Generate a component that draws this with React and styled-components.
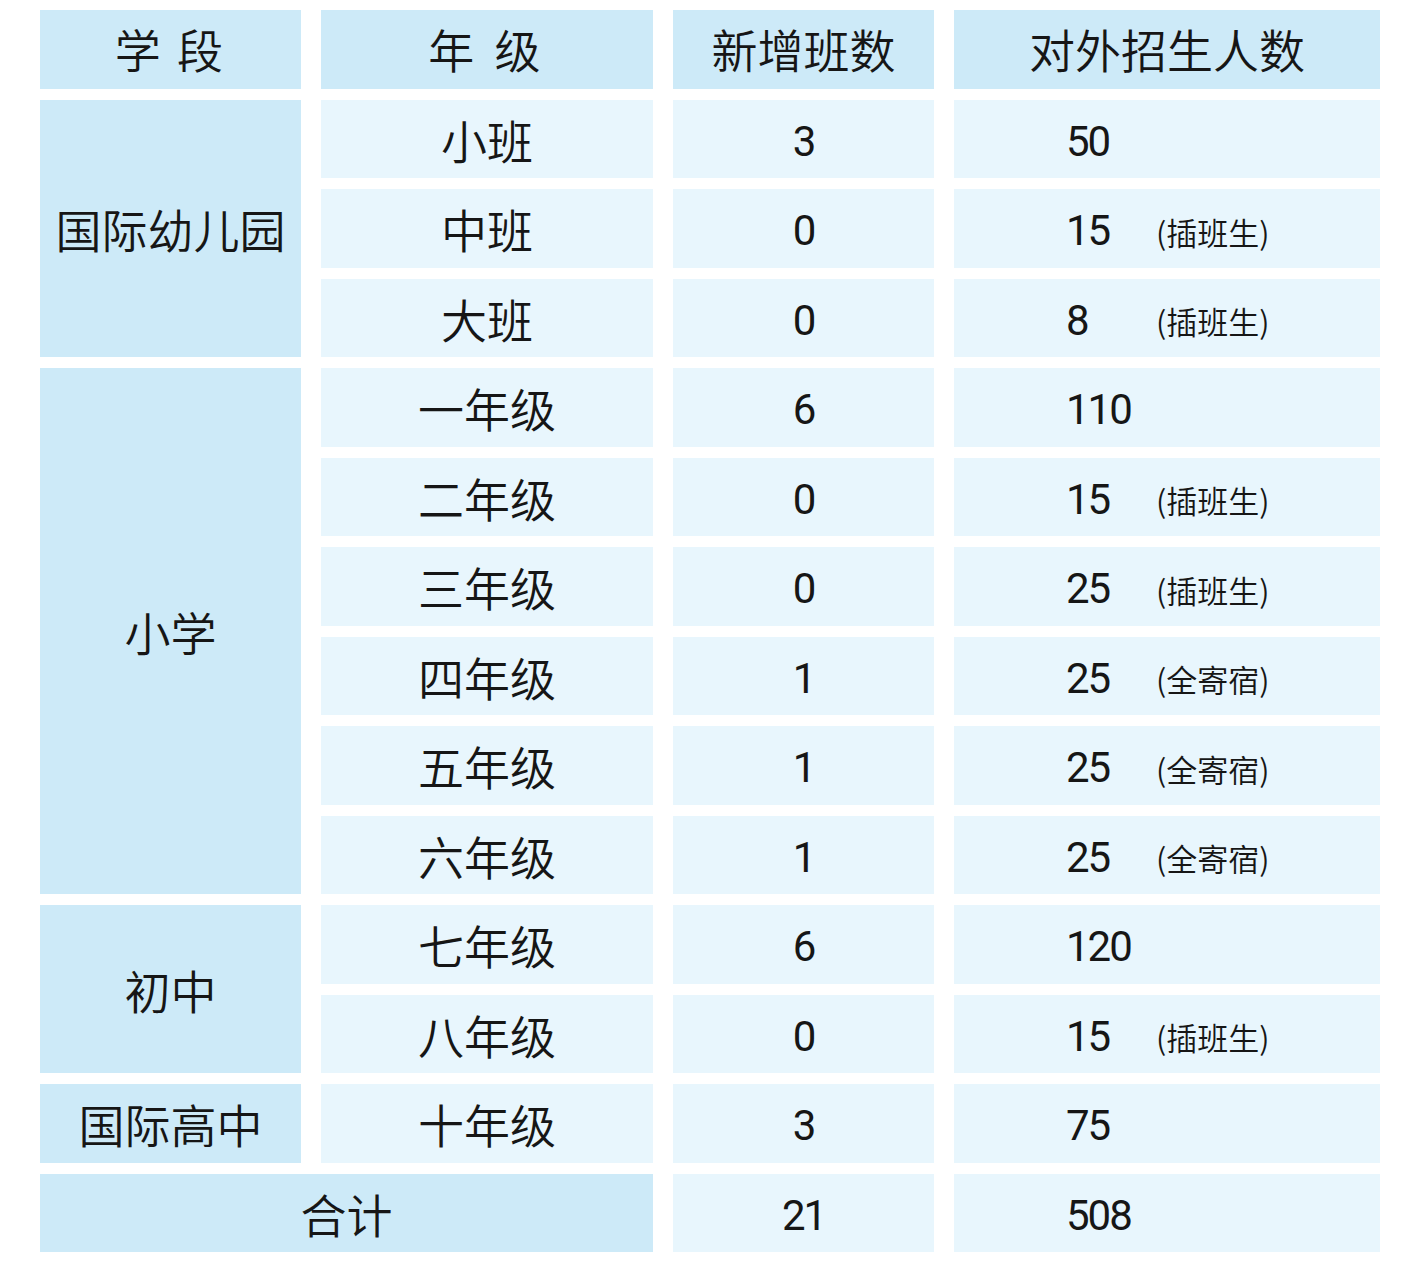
import styled, { createGlobalStyle } from "styled-components";

const GlobalStyle = createGlobalStyle`
  body {
    margin: 0;
    background: #ffffff;
    font-family: "Noto Sans CJK SC", sans-serif;
    color: #161616;
  }
`;

const rows = [
  { stage: "国际幼儿园", span: 3, grade: "小班", added: "3", count: "50" },
  { grade: "中班", added: "0", count: "15", note: "插班生" },
  { grade: "大班", added: "0", count: "8", note: "插班生" },
  { stage: "小学", span: 6, grade: "一年级", added: "6", count: "110" },
  { grade: "二年级", added: "0", count: "15", note: "插班生" },
  { grade: "三年级", added: "0", count: "25", note: "插班生" },
  { grade: "四年级", added: "1", count: "25", note: "全寄宿" },
  { grade: "五年级", added: "1", count: "25", note: "全寄宿" },
  { grade: "六年级", added: "1", count: "25", note: "全寄宿" },
  { stage: "初中", span: 2, grade: "七年级", added: "6", count: "120" },
  { grade: "八年级", added: "0", count: "15", note: "插班生" },
  { stage: "国际高中", span: 1, grade: "十年级", added: "3", count: "75" },
];

const Page = styled.div`
  padding: 10px 0 0 40px;
`;

const Table = styled.div`
  display: grid;
  grid-template-columns: 261px 332px 261px 426px;
  grid-auto-rows: 78.5px;
  column-gap: 20px;
  row-gap: 11px;
`;

const Cell = styled.div`
  display: flex;
  align-items: center;
  justify-content: center;
  background: ${(p) => (p.$strong ? "#cdeaf8" : "#e8f6fd")};
  font-size: 46px;
  font-weight: 350;
  line-height: 1;
  grid-row: ${(p) => (p.$rows ? `span ${p.$rows}` : "auto")};
  grid-column: ${(p) => (p.$cols ? `span ${p.$cols}` : "auto")};
`;

const HeadText = styled.span`
  letter-spacing: ${(p) => p.$spread || "0"};
  padding-bottom: 2px;
`;

const Num = styled.span`
  font-family: Roboto, "Liberation Sans", sans-serif;
  font-weight: 400;
  font-size: 42px;
  letter-spacing: -2px;
  padding-top: 6px;
`;

const CountCell = styled(Cell)`
  justify-content: flex-start;
  padding-left: 112px;
`;

const CountNum = styled(Num)`
  width: 90px;
`;

const Note = styled.span`
  font-size: 31px;
  padding-top: 6px;
`;

const App = () => {
  return (
    <Page>
      <GlobalStyle />
      <Table>
        <Cell $strong>
          <HeadText $spread="3px">学 段</HeadText>
        </Cell>
        <Cell $strong>
          <HeadText $spread="5px">年 级</HeadText>
        </Cell>
        <Cell $strong>
          <HeadText>新增班数</HeadText>
        </Cell>
        <Cell $strong>
          <HeadText>对外招生人数</HeadText>
        </Cell>

        {rows.map((row) => (
          <>
            {row.stage && (
              <Cell key={row.stage} $strong $rows={row.span}>
                {row.stage}
              </Cell>
            )}
            <Cell key={row.grade + "-g"}>{row.grade}</Cell>
            <Cell key={row.grade + "-a"}>
              <Num>{row.added}</Num>
            </Cell>
            <CountCell key={row.grade + "-c"}>
              <CountNum>{row.count}</CountNum>
              {row.note && <Note>({row.note})</Note>}
            </CountCell>
          </>
        ))}

        <Cell $strong $cols={2}>
          合计
        </Cell>
        <Cell>
          <Num>21</Num>
        </Cell>
        <CountCell>
          <CountNum>508</CountNum>
        </CountCell>
      </Table>
    </Page>
  );
};

export default App;
